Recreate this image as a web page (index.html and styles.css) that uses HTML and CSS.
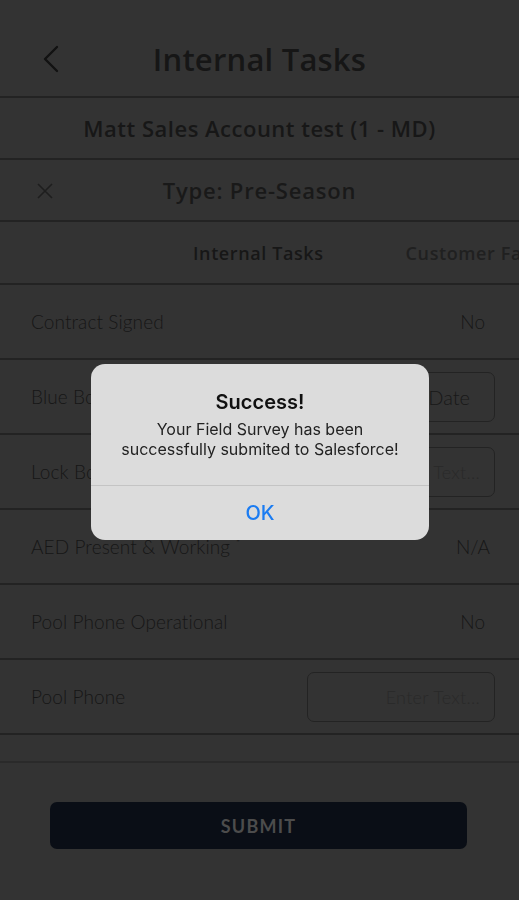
FILE: index.html
```html
<!DOCTYPE html>
<html lang="en">
<head>
    <meta charset="UTF-8">
    <meta name="viewport" content="width=device-width, initial-scale=1.0">
    <title>Internal Tasks</title>
    <link rel="stylesheet" href="styles.css">
</head>
<body>

    <!-- Cabecera -->
    <div class="header">
        <svg class="back" width="20" height="30" viewBox="0 0 20 30">
            <path d="M15 3 L3 15 L15 27" fill="none" stroke="#121212" stroke-width="2.4" stroke-linecap="round" stroke-linejoin="round"/>
        </svg>
        <h1>Internal Tasks</h1>
    </div>

    <div class="bar account">Matt Sales Account test (1 - MD)</div>

    <div class="bar type">
        <svg class="close" width="18" height="18" viewBox="0 0 18 18">
            <path d="M2 2 L16 16 M16 2 L2 16" fill="none" stroke="#1e1e1e" stroke-width="1.6"/>
        </svg>
        <span>Type: Pre-Season</span>
    </div>

    <div class="bar tabs">
        <span class="tab active">Internal Tasks</span>
        <span class="tab">Customer Facing</span>
    </div>

    <!-- Lista de tareas -->
    <div class="list">
        <div class="row">
            <span class="label">Contract Signed</span>
            <span class="value">No</span>
        </div>
        <div class="row">
            <span class="label">Blue Book Date</span>
            <div class="field">Date</div>
        </div>
        <div class="row">
            <span class="label">Lock Box Code</span>
            <div class="field placeholder">Enter Text...</div>
        </div>
        <div class="row">
            <span class="label">AED Present &amp; Working <sup>*</sup></span>
            <span class="value na">N/A</span>
        </div>
        <div class="row">
            <span class="label">Pool Phone Operational</span>
            <span class="value">No</span>
        </div>
        <div class="row">
            <span class="label">Pool Phone</span>
            <div class="field placeholder">Enter Text...</div>
        </div>
        <div class="row small"></div>
    </div>

    <div class="footer">
        <button class="submit">SUBMIT</button>
    </div>

    <!-- Alerta -->
    <div class="overlay">
        <div class="alert">
            <div class="alert-body">
                <div class="alert-title">Success!</div>
                <div class="alert-text">Your Field Survey has been successfully submited to Salesforce!</div>
            </div>
            <div class="alert-btn">OK</div>
        </div>
    </div>

</body>
</html>
```

FILE: styles.css
```css
body {
    margin: 0;
    background-color: #333333;
    font-family: Lato, "Noto Sans", sans-serif;
    color: #1a1a1a;
    overflow: hidden;
}
.header {
    height: 98px;
    display: flex;
    align-items: center;
    justify-content: center;
    border-bottom: 2px solid #232323;
    position: relative;
    box-sizing: border-box;
}
.header h1 {
    margin: 22px 0 0 0;
    font-family: "Open Sans", sans-serif;
    font-size: 31px;
    font-weight: 600;
    color: #161616;
    letter-spacing: 0.2px;
}
.back {
    position: absolute;
    left: 42px;
    top: 44px;
}
.bar {
    height: 62px;
    border-bottom: 2px solid #232323;
    display: flex;
    align-items: center;
    justify-content: center;
    box-sizing: border-box;
    position: relative;
    font-family: "Open Sans", sans-serif;
}
.account {
    font-size: 22px;
    font-weight: 600;
    letter-spacing: 0.5px;
    color: #171717;
}
.type {
    font-size: 22px;
    font-weight: 600;
    letter-spacing: 0.8px;
    color: #191919;
}
.close {
    position: absolute;
    left: 36px;
    top: 22px;
}
.tabs {
    height: 63px;
    justify-content: flex-start;
    padding-left: 193px;
    gap: 82px;
    white-space: nowrap;
    overflow: hidden;
    font-size: 18px;
    font-weight: 600;
    letter-spacing: 0.6px;
}
.tab {
    color: #202020;
}
.tab.active {
    color: #171717;
}
.row {
    height: 75px;
    border-bottom: 2px solid #232323;
    box-sizing: border-box;
    display: flex;
    align-items: center;
    justify-content: space-between;
    padding: 0 24px 0 31px;
}
.row.small {
    height: 28px;
    border-bottom-color: #2a2a2a;
}
.label {
    font-size: 19px;
    font-weight: 300;
    letter-spacing: 0.1px;
    color: #161616;
}
.label sup {
    font-size: 12px;
}
.value {
    font-size: 19px;
    font-weight: 300;
    color: #161616;
    padding-right: 10px;
}
.value.na {
    padding-right: 5px;
}
.field {
    width: 188px;
    height: 50px;
    box-sizing: border-box;
    border: 1px solid #232323;
    border-radius: 7px;
    display: flex;
    align-items: center;
    justify-content: flex-end;
    padding-right: 24px;
    font-size: 20px;
    font-weight: 300;
    color: #181818;
}
.field.placeholder {
    padding-right: 14px;
    font-size: 18px;
    color: #292929;
    letter-spacing: 0.3px;
}
.footer {
    padding: 39px 52px 0 50px;
}
.submit {
    width: 100%;
    height: 47px;
    background-color: #0a0e16;
    border: none;
    border-radius: 7px;
    color: #4c4c4c;
    font-family: Lato, sans-serif;
    font-size: 18px;
    font-weight: 700;
    letter-spacing: 1.2px;
}
.overlay {
    position: fixed;
    inset: 0;
    display: flex;
    justify-content: center;
    align-items: flex-start;
}
.alert {
    margin-top: 364px;
    margin-left: 1px;
    width: 338px;
    background-color: #dcdcdc;
    border-radius: 14px;
    overflow: hidden;
    font-family: Inter, "Liberation Sans", sans-serif;
    text-align: center;
}
.alert-body {
    padding: 26px 24px 26px 24px;
    border-bottom: 1px solid #c4c4c4;
}
.alert-title {
    font-size: 20px;
    font-weight: 600;
    color: #111;
    margin-bottom: 5px;
}
.alert-text {
    font-size: 16px;
    line-height: 20px;
    color: #222;
}
.alert-btn {
    height: 54px;
    line-height: 54px;
    font-size: 20px;
    font-weight: 500;
    color: #1b7cf2;
}
```
